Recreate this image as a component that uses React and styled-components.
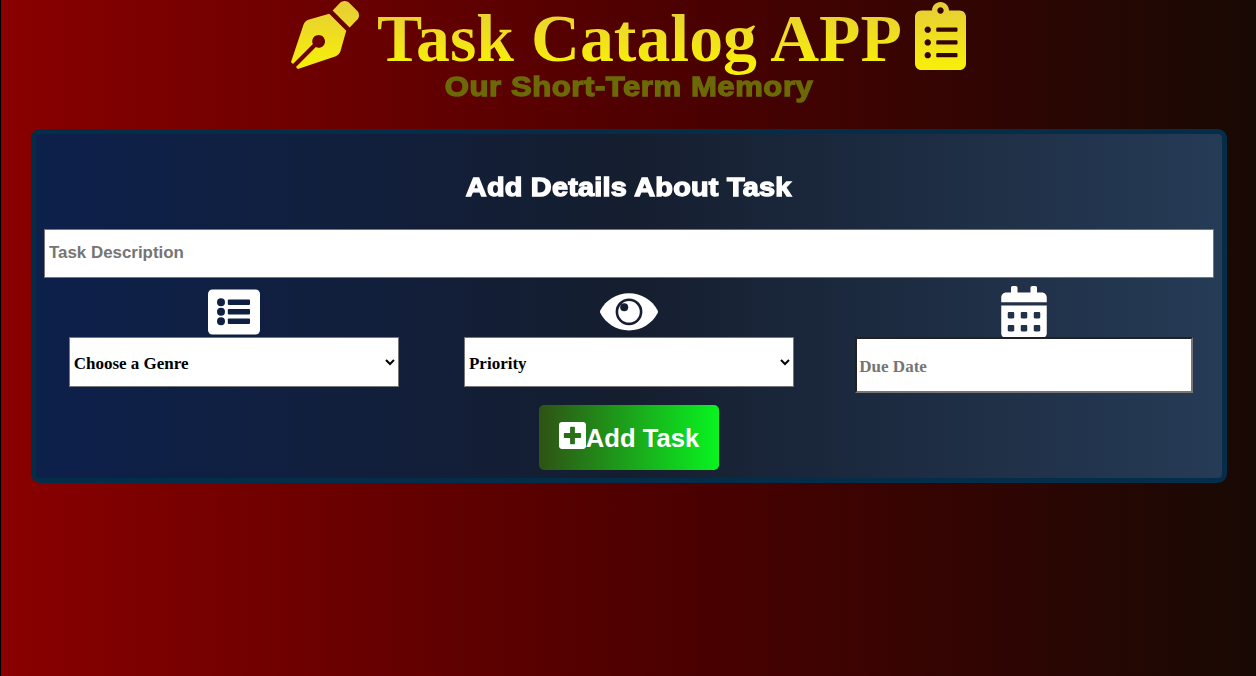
import React from "react";
import styled, { createGlobalStyle } from "styled-components";
import {
  FaPenNib,
  FaClipboardList,
  FaCalendarAlt,
  FaPlusSquare,
} from "react-icons/fa";

const GlobalStyle = createGlobalStyle`
  *, *::before, *::after { box-sizing: border-box; }
  body { margin: 0; background: #1a0a05; }
`;

const Page = styled.main`
  min-height: 100vh;
  border-left: 1px solid #000;
  background: linear-gradient(to right, #8a0000, #500000 50%, #180904);
  display: flex;
  flex-direction: column;
`;

const Header = styled.header`
  height: 129px;
  display: flex;
  flex-direction: column;
  align-items: center;
`;

const TitleRow = styled.div`
  display: flex;
  justify-content: center;
  height: 74px;
  padding-top: 1px;

  svg {
    flex: none;
    font-size: 68px;
    fill: url(#gold);
  }
  svg:first-of-type { margin-right: 18px; }
  svg:last-of-type { width: 51px; margin: 0.5px 0 0 13px; }
`;

const GoldDefs = styled.svg`
  position: absolute;
  width: 0;
  height: 0;
`;

const Title = styled.h1`
  margin: 0;
  font: bold 67.8px/75px "Liberation Serif", serif;
  height: 78px;
  white-space: nowrap;
  background: linear-gradient(#e6cc38, #f8f008 85%);
  background-clip: text;
  -webkit-background-clip: text;
  color: transparent;
`;

const HeavyText = styled.h2`
  margin: 0;
  font: bold ${(p) => p.$size}px/34px "Liberation Sans", Arial, sans-serif;
  letter-spacing: ${(p) => p.$spacing}px;
  color: ${(p) => p.$color};
  -webkit-text-stroke: 1.3px ${(p) => p.$color};
  white-space: nowrap;
  text-align: center;
  transform: scaleX(1.11);
`;

const Subtitle = styled(HeavyText)`
  margin-top: -4px;
  padding-left: 2px;
`;

const Panel = styled.form`
  margin: 0 29px 0 30px;
  height: 354px;
  border: 5px solid #032d48;
  border-radius: 9px;
  background: linear-gradient(to right, #0d204b, #151e2f 50%, #263b56);
  display: flex;
  flex-direction: column;
  align-items: center;
`;

const PanelTitle = styled(HeavyText)`
  margin: 36px 0 25px;
`;

const Description = styled.input`
  width: 1170px;
  height: 49px;
  padding: 0 4px 1px;
  border: 1px solid #767676;
  border-radius: 0;
  background: #fff;
  font: bold 16.9px "Liberation Sans", Arial, sans-serif;
  &::placeholder { color: #757575; }
`;

const Fields = styled.div`
  align-self: stretch;
  display: grid;
  grid-template-columns: repeat(3, 1fr);
  margin-top: 8px;
  height: 119px;
`;

const Field = styled.label`
  display: flex;
  flex-direction: column;
  align-items: center;
  color: #fff;
`;

const FieldIcon = styled.svg`
  display: block;
  flex: none;
  width: ${(p) => p.width}px;
  height: 51px;
  overflow: visible;
`;

const CalendarIcon = styled(FaCalendarAlt)`
  display: block;
  flex: none;
  width: 46px;
  height: 52px;
  margin-bottom: -1px;
`;

const Select = styled.select`
  width: 330px;
  height: 50px;
  padding: 2px 1px 0 0;
  border: 1px solid #767676;
  border-radius: 0;
  background-color: #fff;
  color: #000;
  font: bold 17px "Liberation Serif", serif;
`;

const DateInput = styled.input`
  width: 338px;
  height: 56px;
  padding: 4px 2px 0;
  border: 2px inset #767676;
  background: #fff;
  font: bold 17px "Liberation Serif", serif;
  &::placeholder { color: #757575; }
`;

const AddButton = styled.button`
  width: 180px;
  height: 65px;
  padding: 0;
  border: 0;
  border-radius: 5px;
  background: linear-gradient(to right, #2f5215, #08f420);
  color: #fff;
  font: bold 25.6px "Liberation Sans", Arial, sans-serif;
  display: flex;
  align-items: center;
  justify-content: center;
  padding-top: 2px;

  svg {
    width: 27px;
    height: 31px;
    margin-top: -7px;
  }
`;

function ListIcon() {
  return (
    <FieldIcon width={52} viewBox="0 0 52 51">
      <rect y="3.4" width="52" height="45.2" rx="4.5" fill="#fff" />
      <g fill="#0f2043">
        {[16.3, 25.8, 35.3].map((y) => (
          <React.Fragment key={y}>
            <circle cx="13" cy={y} r="4" />
            <rect x="19.8" y={y - 2.7} width="22.2" height="5.3" rx="0.8" />
          </React.Fragment>
        ))}
      </g>
    </FieldIcon>
  );
}

function EyeIcon() {
  return (
    <FieldIcon width={58} viewBox="0 0 58 51">
      <path
        d="M57.7 24.4C52.2 13.9 41.4 7.2 29 7.2S5.8 13.9.3 24.4a3 3 0 0 0 0 2.7C5.8 37.6 16.6 44.5 29 44.5s23.2-6.9 28.7-17.4a3 3 0 0 0 0-2.7Z"
        fill="#fff"
      />
      <circle cx="29" cy="25.8" r="12.1" fill="#fff" stroke="#151e30" strokeWidth="2.6" />
      <circle cx="24.2" cy="21.2" r="4" fill="#151e30" />
    </FieldIcon>
  );
}

export default function App() {
  return (
    <Page>
      <GlobalStyle />
      <GoldDefs aria-hidden="true">
        <linearGradient id="gold" x1="0" y1="0" x2="0" y2="1">
          <stop offset="0" stopColor="#e6cc38" />
          <stop offset="1" stopColor="#f8f008" />
        </linearGradient>
      </GoldDefs>
      <Header>
        <TitleRow>
          <FaPenNib />
          <Title>Task Catalog APP</Title>
          <FaClipboardList />
        </TitleRow>
        <Subtitle $size={28} $spacing={0.5} $color="#6b6a07">Our Short-Term Memory</Subtitle>
      </Header>
      <Panel onSubmit={(e) => e.preventDefault()}>
        <PanelTitle $size={26} $spacing={0.2} $color="#fff">Add Details About Task</PanelTitle>
        <Description placeholder="Task Description" />
        <Fields>
          <Field>
            <ListIcon />
            <Select><option>Choose a Genre</option></Select>
          </Field>
          <Field>
            <EyeIcon />
            <Select><option>Priority</option></Select>
          </Field>
          <Field>
            <CalendarIcon />
            <DateInput placeholder="Due Date" />
          </Field>
        </Fields>
        <AddButton type="submit"><FaPlusSquare />Add Task</AddButton>
      </Panel>
    </Page>
  );
}
